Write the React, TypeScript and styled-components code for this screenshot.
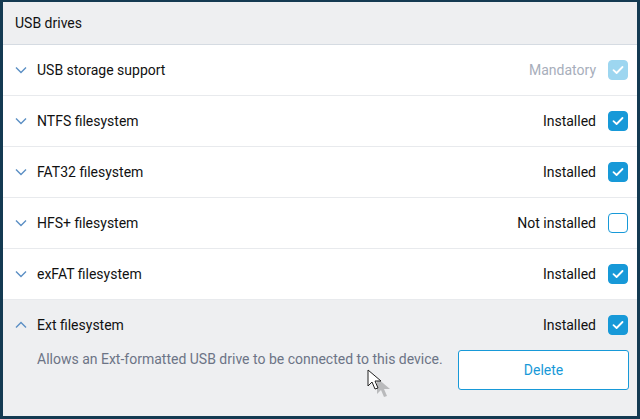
import React from 'react'
import styled, { createGlobalStyle } from 'styled-components'

const GlobalStyle = createGlobalStyle`
   html, body {
      margin: 0;
      padding: 0;
      background: #143a52;
   }
   body {
      font-family: Roboto, "Noto Sans", sans-serif;
      -webkit-font-smoothing: antialiased;
   }
`

type Item = {
   name: string
   status: string
   checked: boolean
   disabled?: boolean
   open?: boolean
   description?: string
}

const items: Item[] = [
   { name: 'USB storage support', status: 'Mandatory', checked: true, disabled: true },
   { name: 'NTFS filesystem', status: 'Installed', checked: true },
   { name: 'FAT32 filesystem', status: 'Installed', checked: true },
   { name: 'HFS+ filesystem', status: 'Not installed', checked: false },
   { name: 'exFAT filesystem', status: 'Installed', checked: true },
   {
      name: 'Ext filesystem',
      status: 'Installed',
      checked: true,
      open: true,
      description: 'Allows an Ext-formatted USB drive to be connected to this device.',
   },
]

export default function App() {
   return (
      <>
         <GlobalStyle />
         <Frame>
            <Panel>
               <Header>USB drives</Header>
               {items.map(item => (
                  <Component key={item.name} item={item} />
               ))}
               <Cursor />
            </Panel>
         </Frame>
      </>
   )
}

const Component = ({ item }: { item: Item }) => (
   <Row $open={item.open}>
      <RowHead>
         <Chevron $up={item.open} />
         <Name>{item.name}</Name>
         <Status $muted={item.disabled}>{item.status}</Status>
         <CheckBox $checked={item.checked} $disabled={item.disabled}>
            {item.checked && (
               <svg width="12" height="10" viewBox="0 0 12 10">
                  <path d="M1.5 5.2 L4.6 8 L10.5 2" fill="none" stroke="#fff" strokeWidth="1.8" strokeLinecap="round" strokeLinejoin="round" />
               </svg>
            )}
         </CheckBox>
      </RowHead>
      {item.open && (
         <Details>
            <Description>{item.description}</Description>
            <DeleteButton>Delete</DeleteButton>
         </Details>
      )}
   </Row>
)

const Chevron = ({ $up }: { $up?: boolean }) => (
   <ChevronBox>
      <svg width="12" height="8" viewBox="0 0 12 8">
         <path
            d={$up ? 'M1 6.5 L6 1.5 L11 6.5' : 'M1 1.5 L6 6.5 L11 1.5'}
            fill="none"
            stroke="#5b8fc4"
            strokeWidth="1.4"
         />
      </svg>
   </ChevronBox>
)

const Cursor = () => (
   <CursorBox>
      <svg width="26" height="30" viewBox="0 0 26 30">
         <path d="M6 6 L6 22 L10 18 L13 25 L16 24 L13 17 L19 17 Z" fill="#000" opacity="0.22" transform="translate(4 3)" />
         <path d="M1 1 L1 17 L5 13 L8 20 L11 19 L8 12 L14 12 Z" fill="#fff" stroke="#222" strokeWidth="1" strokeLinejoin="round" />
      </svg>
   </CursorBox>
)

const Frame = styled.div`
   width: 640px;
   height: 419px;
   box-sizing: border-box;
   padding: 2px 3px 3px 3px;
   background: #143a52;
`

const Panel = styled.div`
   position: relative;
   height: 100%;
   background: #ffffff;
   overflow: hidden;
`

const Header = styled.div`
   height: 42px;
   display: flex;
   align-items: center;
   padding-left: 12px;
   background: #eeeff1;
   border-bottom: 1px solid #d5dbe2;
   font-size: 14px;
   color: #111;
`

const Row = styled.div<{ $open?: boolean }>`
   background: ${p => (p.$open ? '#eeeff1' : '#ffffff')};
   border-bottom: ${p => (p.$open ? 'none' : '1px solid #e8eaed')};
   ${p => (p.$open ? 'min-height: 120px;' : '')}
`

const RowHead = styled.div`
   height: 50px;
   display: flex;
   align-items: center;
   padding: 0 9px 0 12px;
`

const ChevronBox = styled.span`
   width: 22px;
   display: flex;
   align-items: center;
`

const Name = styled.span`
   flex: 1;
   font-size: 14px;
   color: #111;
`

const Status = styled.span<{ $muted?: boolean }>`
   font-size: 14px;
   color: ${p => (p.$muted ? '#a7aebb' : '#111')};
   margin-right: 12px;
`

const CheckBox = styled.span<{ $checked: boolean; $disabled?: boolean }>`
   width: 20px;
   height: 20px;
   box-sizing: border-box;
   border-radius: 4px;
   display: flex;
   align-items: center;
   justify-content: center;
   background: ${p => (p.$checked ? (p.$disabled ? '#9dd6f0' : '#1799d8') : '#ffffff')};
   border: 1.5px solid ${p => (p.$checked ? (p.$disabled ? '#9dd6f0' : '#1799d8') : '#1799d8')};
`

const Details = styled.div`
   display: flex;
   align-items: flex-start;
   padding: 0 8px 0 34px;
`

const Description = styled.p`
   flex: 1;
   margin: 0;
   padding-top: 1px;
   font-size: 14px;
   color: #6c7486;
`

const DeleteButton = styled.button`
   width: 171px;
   height: 40px;
   margin-top: 0;
   background: #ffffff;
   border: 1px solid #1799d8;
   border-radius: 3px;
   font-family: Roboto, sans-serif;
   font-size: 14px;
   color: #1799d8;
`

const CursorBox = styled.div`
   position: absolute;
   left: 364px;
   top: 367px;
   pointer-events: none;
`
